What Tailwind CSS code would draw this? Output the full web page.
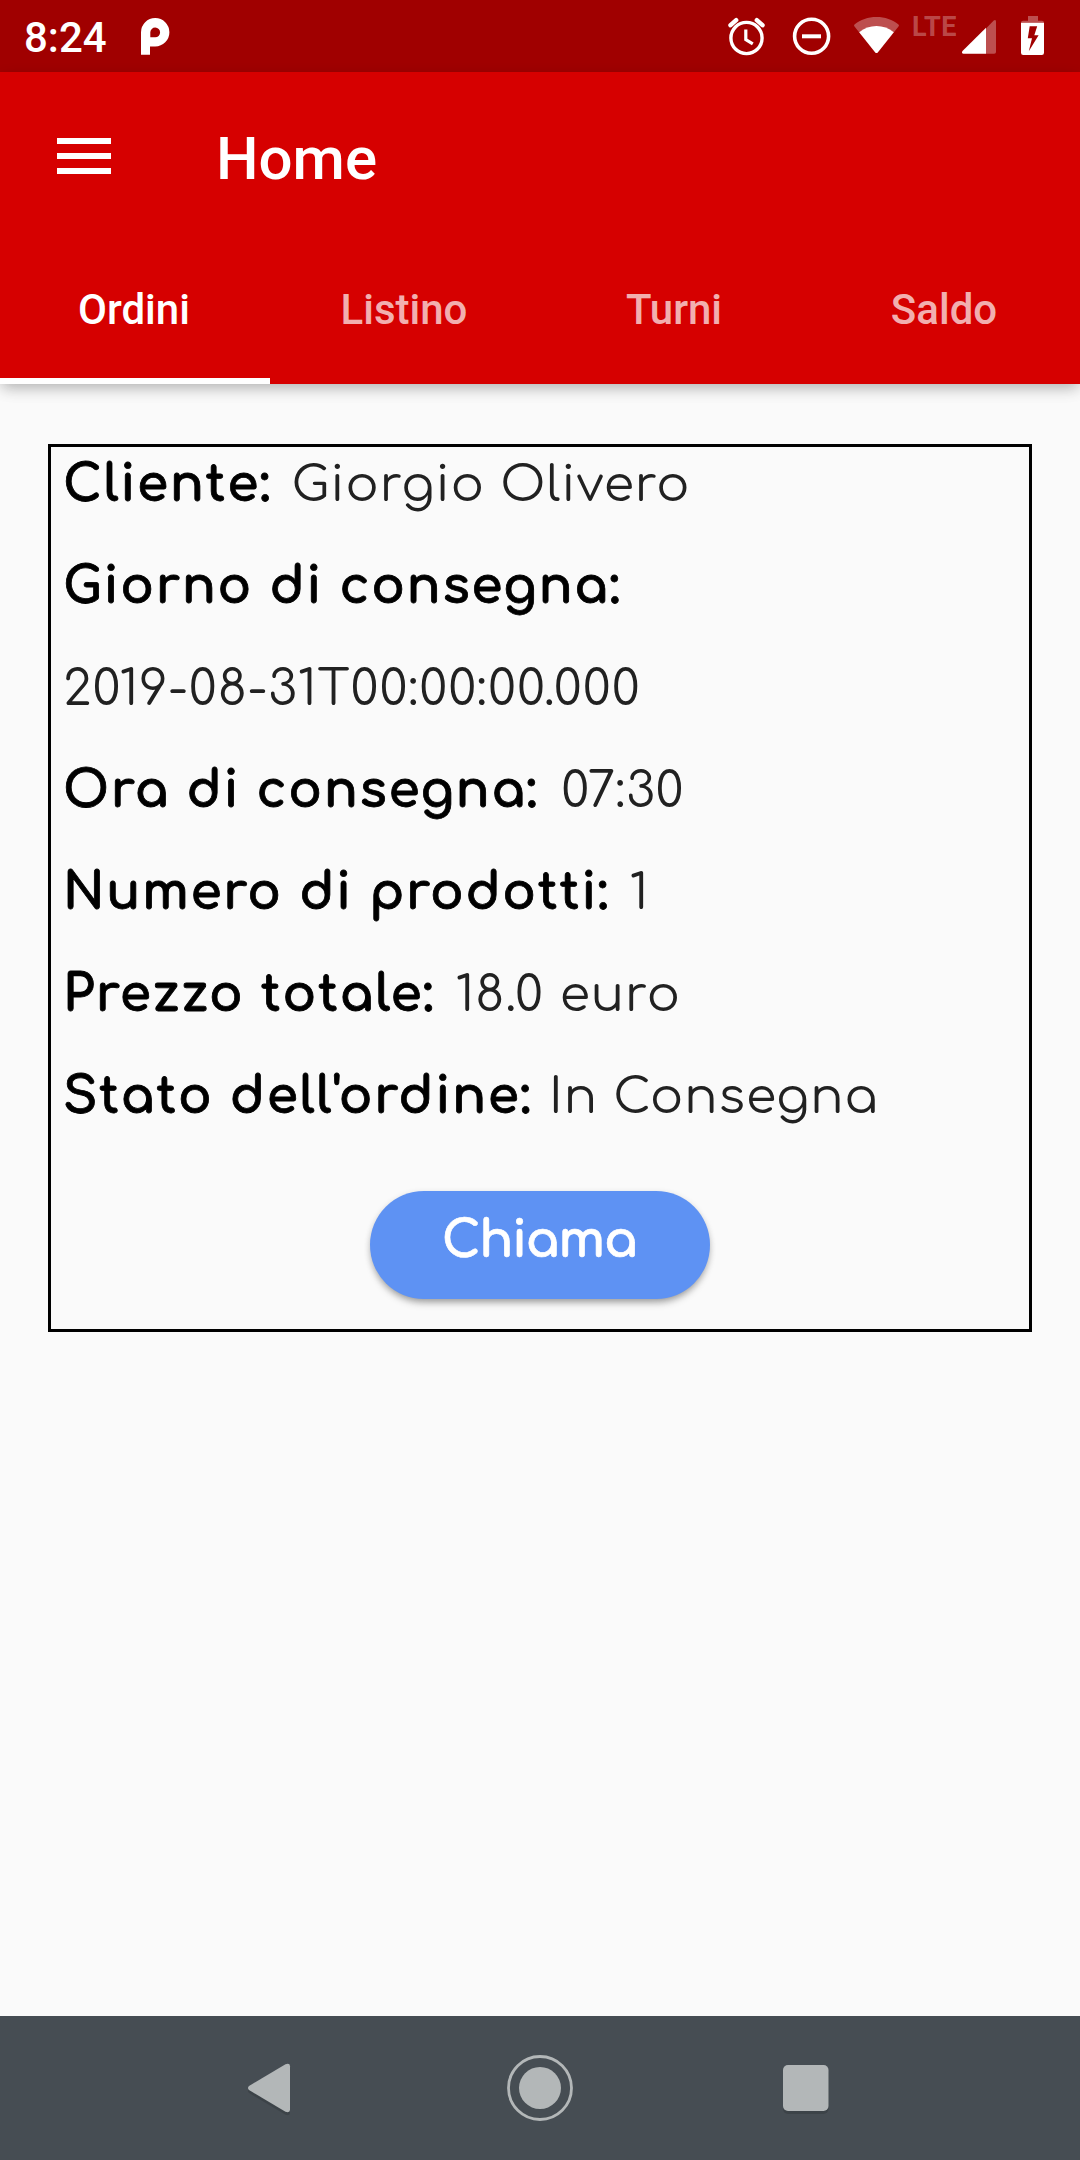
<!DOCTYPE html>
<html lang="it">
<head>
<meta charset="utf-8">
<title>Home</title>
<script src="https://cdn.jsdelivr.net/npm/@tailwindcss/browser@4"></script>
</head>
<body class="flex h-[2160px] w-[1080px] flex-col overflow-hidden bg-[#fafafa] font-['Roboto',sans-serif]">
  <!-- Status bar -->
  <div class="flex h-[72px] shrink-0 items-start bg-[#a00000] text-white">
    <div class="ml-6 w-[86px] text-[42px] leading-[75px] font-medium whitespace-nowrap">8:24</div>
    <svg class="mt-[17px] ml-[30px] h-[40px] w-[30px]" viewBox="140 17 30 40" fill="#fff" fill-rule="evenodd"><path d="M141 32.3a14.2 14.2 0 1 1 14.2 14.2H150v8.2h-9zM150.300 37.300V32.300a4.900 4.900 0 1 1 4.900 5z"/></svg>
    <svg class="mt-[16px] ml-[557px] h-[40px] w-[40px]" viewBox="727 16 40 40" fill="none" stroke="#fff" stroke-width="3.400"><circle cx="746.500" cy="38" r="15.600"/><path d="M730.500 25.200l5.700-5M762.500 25.200l-5.700-5" stroke-width="4.400" stroke-linecap="round"/><path d="M745.800 29.500v10.200l7 4.200" stroke-width="3.200"/></svg>
    <svg class="mt-[16px] ml-[25px] h-[40px] w-[40px]" viewBox="792 16 40 40" fill="none" stroke="#fff" stroke-width="3.600"><circle cx="811.600" cy="36.300" r="17"/><path d="M802 36.300h19" stroke-width="4"/></svg>
    <svg class="mt-[16px] ml-[21px] h-[40px] w-[48px]" viewBox="853 16 48 40"><path d="M876.500 17c-8.500 0-16 2.600-22 7.400q-1 1 0 2.200l20.800 25.800q1.200 1.200 2.400 0l20.800-25.800q1-1.200 0-2.200c-6-4.800-13.500-7.400-22-7.400z" fill="#fff" fill-opacity=".31"/><path d="M859.200 32.300c5-4 11-6.200 17.300-6.200s12.300 2.200 17.300 6.200l-16.100 20.100q-1.200 1.200-2.400 0z" fill="#fff"/></svg>
    <div class="mt-[11px] ml-[10px] w-[46px] pl-px text-[27px] leading-[32px] font-bold tracking-[0.400px] whitespace-nowrap text-white/30">LTE</div>
    <svg class="mt-[16px] ml-[4px] h-[40px] w-[36px]" viewBox="961 16 36 40"><path d="M986 28.500l7.500-7.800q2.500-2 2.500 1V52q0 1.800-1.800 1.800H986z" fill="#fff" fill-opacity=".31"/><path d="M986 27.800v26H963.500q-2.500-.5-1-2.800z" fill="#fff"/></svg>
    <svg class="mt-[14px] ml-[22px] h-[42px] w-[28px]" viewBox="1019 14 28 42"><path d="M1028 16h10v4.800h4q2 0 2 2h-23q0-2 2-2h5z" fill="#fff" fill-opacity=".31"/><path fill-rule="evenodd" d="M1021 22.800h23v30q0 2.200-2.200 2.200h-18.600q-2.200 0-2.200-2.200zM1029.700 26.300l-1.900 12h4.200l-3.200 13 9.800-16h-4.300l2.900-9z" fill="#fff"/></svg>
  </div>

  <!-- App bar with tabs -->
  <header class="relative flex h-[312px] shrink-0 flex-col bg-[#d60000] text-white shadow-[0_5px_14px_-2px_rgb(0_0_0/0.28),0_8px_16px_rgb(0_0_0/0.04)]">
    <div class="flex h-[168px] items-center">
      <div class="ml-[57px] flex w-[54px] flex-col gap-[9px]">
        <span class="h-[6px] bg-white"></span>
        <span class="h-[6px] bg-white"></span>
        <span class="h-[6px] bg-white"></span>
      </div>
      <h1 class="ml-[105px] pt-[6px] text-[60px] leading-[70px] font-medium whitespace-nowrap">Home</h1>
    </div>
    <nav class="grid h-[144px] grid-cols-4 text-center text-[42px] leading-[136px] font-medium">
      <div class="border-b-[6px] border-white pt-[2px] pr-[2px]">Ordini</div>
      <div class="pt-[2px] pr-[2px] text-white/70">Listino</div>
      <div class="pt-[2px] pr-[2px] text-white/70">Turni</div>
      <div class="pt-[2px] pr-[2px] text-white/70">Saldo</div>
    </nav>
  </header>

  <!-- Order -->
  <main class="grow px-12 pt-[60px] font-['Comfortaa','Quicksand','Inter',sans-serif] text-[50px]">
    <section class="flex flex-col border-[3px] border-black pb-[30px] pl-[12px]">
      <dl class="flex flex-col gap-[25px] leading-[77px] whitespace-nowrap">
        <div class="flex"><dt class="font-bold tracking-[1.700px] text-black [-webkit-text-stroke:0.8px_black]">Cliente:</dt><dd class="ml-[20px] text-[49px] font-normal tracking-[1.050px] text-[#212121]">Giorgio Olivero</dd></div>
        <div class="flex h-[77px]"><dt class="font-bold tracking-[1.700px] text-black [-webkit-text-stroke:0.8px_black]">Giorno di consegna:</dt></div>
        <div class="flex h-[77px]"><dd class="text-[49px] font-normal tracking-[1.050px] text-[#212121]">2019-08-31T00:00:00.000</dd></div>
        <div class="flex"><dt class="font-bold tracking-[1.700px] text-black [-webkit-text-stroke:0.8px_black]">Ora di consegna:</dt><dd class="ml-[23px] text-[49px] font-normal tracking-[0.800px] text-[#212121]">07:30</dd></div>
        <div class="flex"><dt class="font-bold tracking-[1.700px] text-black [-webkit-text-stroke:0.8px_black]">Numero di prodotti:</dt><dd class="ml-[20px] text-[49px] font-normal text-[#212121]">1</dd></div>
        <div class="flex"><dt class="font-bold tracking-[1.700px] text-black [-webkit-text-stroke:0.8px_black]">Prezzo totale:</dt><dd class="ml-[21px] text-[49px] font-normal tracking-[1.100px] text-[#212121]">18.0 euro</dd></div>
        <div class="flex"><dt class="font-bold tracking-[1.700px] text-black [-webkit-text-stroke:0.8px_black]">Stato dell'ordine:</dt><dd class="ml-[17px] text-[49px] font-normal tracking-[1.050px] text-[#212121]">In Consegna</dd></div>
      </dl>
      <button class="mt-[55px] ml-[307px] h-[108px] w-[340px] rounded-full bg-[#5e92f3] pr-[2px] pb-[8px] text-center leading-[100px] font-bold tracking-[-1.300px] text-white shadow-[0_6px_8px_-3px_rgb(0_0_0/0.3),0_2px_6px_rgb(0_0_0/0.16)] [-webkit-text-stroke:0.6px_white]">Chiama</button>
    </section>
  </main>

  <!-- System navigation -->
  <footer class="flex h-[144px] shrink-0 items-center justify-center bg-[#464d53]">
    <svg class="h-[72px] w-[640px]" viewBox="220 2052 640 72">
      <g fill="#000" fill-opacity=".13" transform="translate(0 3)"><path d="M249 2086l36.500-21.700q4.500-1.600 4.500 2v43.400q0 3.600-4.500 2L249 2090q-2-2 0-4z"/><rect x="783" y="2065" width="45.500" height="46" rx="5"/></g>
      <g fill="#b3b7b8"><path d="M249 2086l36.500-21.700q4.500-1.600 4.500 2v43.400q0 3.600-4.500 2L249 2090q-2-2 0-4z"/><circle cx="540" cy="2088" r="21"/><rect x="783" y="2065" width="45.500" height="46" rx="5"/></g>
      <circle cx="540" cy="2088" r="31.500" fill="none" stroke="#b3b7b8" stroke-width="2.800"/>
    </svg>
  </footer>
</body>
</html>
